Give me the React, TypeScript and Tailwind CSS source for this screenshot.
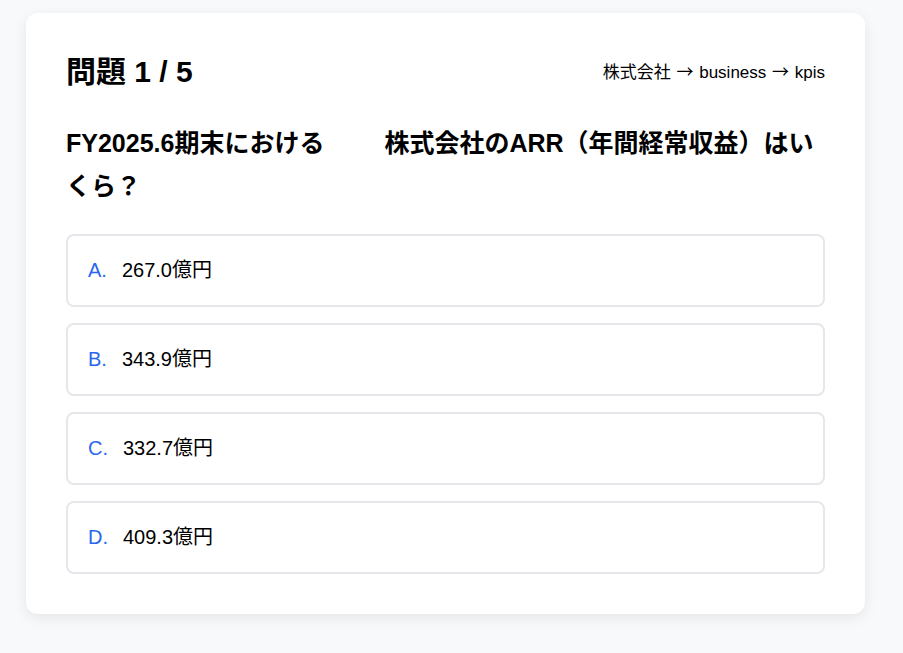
const options = [
  { label: "A.", value: "267.0億円" },
  { label: "B.", value: "343.9億円" },
  { label: "C.", value: "332.7億円" },
  { label: "D.", value: "409.3億円" },
]

function Arrow() {
  return (
    <span className="mx-px" style={{ fontFamily: '"Noto Sans CJK JP", sans-serif' }}>
      →
    </span>
  )
}

export default function App() {
  return (
    <div
      className="min-h-[653px] bg-[#f8f9fa] pt-[13px] text-black"
      style={{ fontFamily: '"Liberation Sans", "Noto Sans CJK JP", sans-serif' }}
    >
      <div className="ml-[26px] w-[839px] rounded-[12px] bg-white p-10 shadow-[0_4px_14px_rgba(0,0,0,0.08)]">
        <div className="mb-[31px] flex items-center justify-between">
          <h2 className="text-[30px] font-bold leading-[38px]">問題 1 / 5</h2>
          <span className="text-[17px]">
            株式会社 <Arrow /> business <Arrow /> kpis
          </span>
        </div>

        <p className="mb-[27px] text-[25px] font-bold leading-[1.7]">
          FY2025.6期末における<span className="inline-block w-[60px]"></span>株式会社のARR（年間経常収益）はいくら？
        </p>

        <div className="flex flex-col gap-4">
          {options.map((o) => (
            <div
              key={o.label}
              className="rounded-lg border-2 border-[#e5e7eb] bg-white p-5 text-xl leading-[29px]"
            >
              <span className="mr-[15px] text-[#2866f0]">{o.label}</span>
              <span>{o.value}</span>
            </div>
          ))}
        </div>
      </div>
    </div>
  )
}
